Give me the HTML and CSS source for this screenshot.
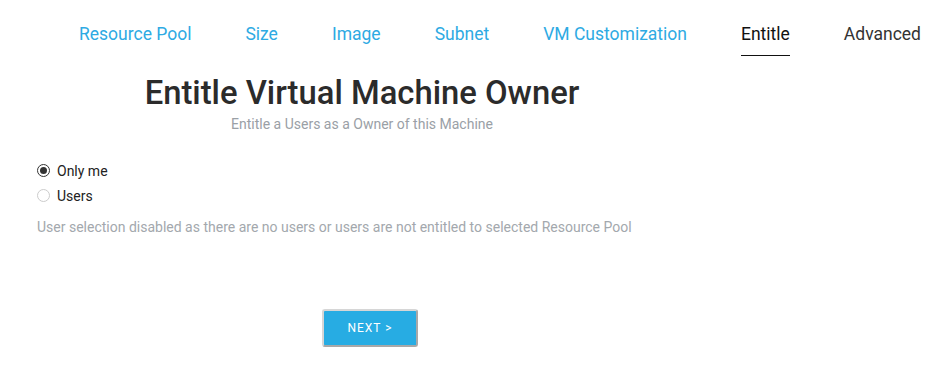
FILE: index.html
```html
<!DOCTYPE html>
<html>
<head>
<meta charset="utf-8">
<link rel="stylesheet" href="styles.css">
</head>
<body>
<nav class="tabs">
  <a class="tab">Resource Pool</a>
  <a class="tab">Size</a>
  <a class="tab">Image</a>
  <a class="tab">Subnet</a>
  <a class="tab">VM Customization</a>
  <a class="tab active">Entitle</a>
  <a class="tab upcoming">Advanced</a>
</nav>
<header class="head">
  <h1 class="title">Entitle Virtual Machine Owner</h1>
  <p class="subtitle">Entitle a Users as a Owner of this Machine</p>
</header>
<section class="options">
  <label class="radio"><span class="dot checked"></span>Only me</label>
  <label class="radio"><span class="dot disabled"></span>Users</label>
  <p class="hint">User selection disabled as there are no users or users are not entitled to selected Resource Pool</p>
</section>
<div class="actions">
  <button class="next">NEXT &gt;</button>
</div>
</body>
</html>
```
FILE: styles.css
```css
* { box-sizing: border-box; }
body {
  margin: 0;
  width: 939px;
  height: 365px;
  background: #fff;
  font-family: Roboto, "Noto Sans", sans-serif;
  overflow: hidden;
}
.tabs {
  display: flex;
  gap: 54px;
  padding: 22px 0 0 79px;
  height: 57px;
}
.tab {
  font-size: 17.5px;
  line-height: 24px;
  color: #2eaae3;
  height: 34px;
  white-space: nowrap;
}
.tab.active {
  color: #111;
  border-bottom: 1px solid #111;
}
.tab.upcoming { color: #333; }
.head {
  width: 724px;
  text-align: center;
}
.title {
  margin: 16px 0 0;
  font-size: 32.8px;
  font-weight: 500;
  line-height: 40px;
  color: #2b2b2b;
}
.subtitle {
  margin: 2px 0 0;
  font-size: 14px;
  line-height: 19px;
  color: #9aa0a6;
}
.options {
  padding: 24px 0 0 37px;
}
.radio {
  display: flex;
  align-items: center;
  gap: 7px;
  height: 25px;
  font-size: 14px;
  color: #222;
}
.dot {
  width: 13px;
  height: 13px;
  border-radius: 50%;
  border: 1px solid #ccc;
  background: #fff;
  position: relative;
}
.dot.checked { border: 1px solid #333; }
.dot.checked::after {
  content: "";
  position: absolute;
  left: 2px;
  top: 2px;
  width: 7px;
  height: 7px;
  border-radius: 50%;
  background: #333;
}
.hint {
  margin: 10px 0 0;
  font-size: 14px;
  line-height: 18px;
  color: #a3a8ad;
}
.actions {
  padding: 73px 0 0 322px;
}
.next {
  width: 96px;
  height: 38px;
  background: #27ace3;
  border: 2px solid #d6d6d6;
  border-right-color: #a8a8a8;
  border-bottom-color: #a8a8a8;
  border-radius: 3px;
  color: #fff;
  font-family: Roboto, sans-serif;
  font-size: 12px;
  letter-spacing: 1px;
  padding: 0;
}
```
